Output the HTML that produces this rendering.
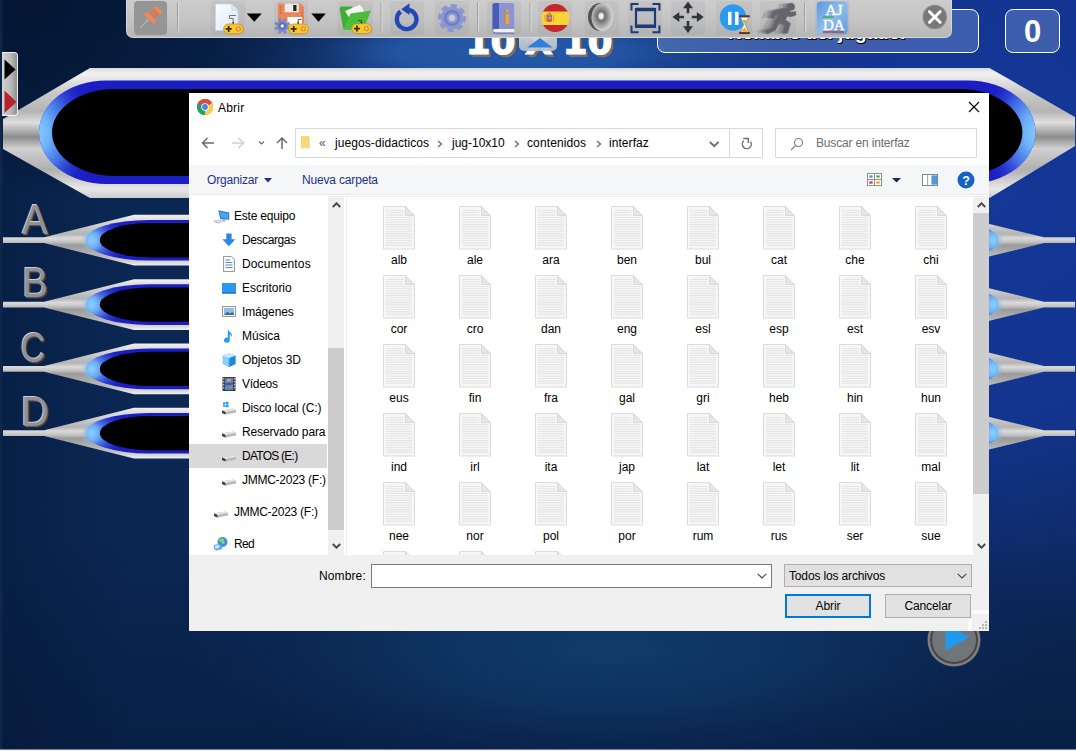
<!DOCTYPE html>
<html lang="es">
<head>
<meta charset="utf-8">
<title>10 X 10</title>
<style>
html,body{margin:0;padding:0;}
body{width:1076px;height:751px;overflow:hidden;position:relative;background:#0a2248;font-family:"Liberation Sans",sans-serif;font-size:12px;color:#000;}
.abs{position:absolute;}
#bg{position:absolute;left:0;top:0;width:1076px;height:751px;display:block;}
/* game hud */
.hudbox{top:9px;height:42px;border:1.5px solid #fff;border-radius:8px;background:rgba(120,150,210,.42);color:#fff;font-weight:bold;text-align:center;box-sizing:content-box;}
#pname{left:657px;width:320px;font-size:19px;line-height:45px;text-shadow:1px 1px 0 #000,0 1px 0 #000;}
#score{left:1005px;width:53px;font-size:31px;line-height:44px;}
#title{left:439px;top:20px;width:200px;text-align:center;font-family:"DejaVu Sans","Liberation Sans",sans-serif;font-weight:bold;font-size:36px;line-height:44px;color:#fff;-webkit-text-stroke:1.100px #fff;text-shadow:2.500px 2.500px 0 #707070,1.500px 1.500px 0 #606060,3px 3px 1px #444;white-space:pre;word-spacing:-3px;}
.letter{left:14px;width:42px;text-align:center;font-size:43px;line-height:43px;color:#909096;text-shadow:-1px -1px 0 #d0d0d0,1px 1px 0 #58585c,2px 1.500px 1px #2e2e34;transform:scaleX(.9);}
#ltab{left:2px;top:52px;width:16px;height:64px;border-radius:0 4px 4px 0;background:linear-gradient(90deg,#d4d4d4,#b8b8b8 60%,#8e8e8e);border:1px solid #f2f2f2;border-left:none;box-sizing:border-box;}
#play{left:927px;top:613px;width:54px;height:54px;}
</style>
</head>
<body>
<svg id="bg" width="1076" height="751" viewBox="0 0 1076 751">
<defs>
<radialGradient id="g1" gradientUnits="userSpaceOnUse" cx="960" cy="170" r="580"><stop offset="0" stop-color="#14379a"/><stop offset=".45" stop-color="#13348e"/><stop offset=".72" stop-color="#0e2b6a" stop-opacity=".7"/><stop offset="1" stop-color="#0b2750" stop-opacity="0"/></radialGradient>
<radialGradient id="g2" gradientUnits="userSpaceOnUse" cx="510" cy="52" r="400" gradientTransform="translate(0 52) scale(1 .2) translate(0 -52)"><stop offset="0" stop-color="#2659aa"/><stop offset=".28" stop-color="#2456a6" stop-opacity=".95"/><stop offset=".5" stop-color="#1a4690" stop-opacity=".6"/><stop offset=".75" stop-color="#143a80" stop-opacity=".2"/><stop offset="1" stop-color="#12367a" stop-opacity="0"/></radialGradient>
<radialGradient id="g3" gradientUnits="userSpaceOnUse" cx="610" cy="650" r="430" gradientTransform="translate(0 650) scale(1 .3) translate(0 -650)"><stop offset="0" stop-color="#103c6a"/><stop offset=".45" stop-color="#0f3664" stop-opacity=".75"/><stop offset="1" stop-color="#0d2c5c" stop-opacity="0"/></radialGradient><linearGradient id="gbot" gradientUnits="userSpaceOnUse" x1="0" x2="0" y1="540" y2="751"><stop offset="0" stop-color="#061838" stop-opacity="0"/><stop offset=".5" stop-color="#061838" stop-opacity=".3"/><stop offset="1" stop-color="#061838" stop-opacity=".55"/></linearGradient>
<radialGradient id="gtl" gradientUnits="userSpaceOnUse" cx="40" cy="20" r="340" gradientTransform="scale(1 .55)"><stop offset="0" stop-color="#031430" stop-opacity=".85"/><stop offset=".6" stop-color="#031430" stop-opacity=".5"/><stop offset="1" stop-color="#031430" stop-opacity="0"/></radialGradient>
<radialGradient id="soft"><stop offset="0" stop-color="#8ad0ff" stop-opacity=".95"/><stop offset=".55" stop-color="#7abcf8" stop-opacity=".6"/><stop offset="1" stop-color="#9ab8e0" stop-opacity="0"/></radialGradient>
<linearGradient id="gl" x1="0" x2="1" y1="0" y2="0"><stop offset="0" stop-color="#04152f" stop-opacity=".4"/><stop offset=".12" stop-color="#04152f" stop-opacity="0"/></linearGradient>
<linearGradient id="silv" gradientUnits="userSpaceOnUse" x1="0" x2="0" y1="68" y2="198"><stop offset="0" stop-color="#d8d8d8"/><stop offset=".04" stop-color="#f2f2f2"/><stop offset=".2" stop-color="#c8c8c8"/><stop offset=".33" stop-color="#b4b4b4"/><stop offset=".42" stop-color="#dedede"/><stop offset=".53" stop-color="#8c8c8c"/><stop offset=".62" stop-color="#d0d0d0"/><stop offset=".78" stop-color="#b0b0b0"/><stop offset=".93" stop-color="#e8e8e8"/><stop offset="1" stop-color="#cccccc"/></linearGradient>
<linearGradient id="silvb" gradientUnits="userSpaceOnUse" x1="0" x2="0" y1="-25.400" y2="25.400"><stop offset="0" stop-color="#f2f2f2"/><stop offset=".1" stop-color="#dcdcdc"/><stop offset=".38" stop-color="#b4b4b4"/><stop offset=".46" stop-color="#dadada"/><stop offset=".53" stop-color="#c4c4c4"/><stop offset=".6" stop-color="#9a9a9a"/><stop offset=".85" stop-color="#bebebe"/><stop offset="1" stop-color="#f0f0f0"/></linearGradient>
<radialGradient id="glowML" gradientUnits="userSpaceOnUse" cx="34" cy="133" r="62" gradientTransform="translate(0 133) scale(1 1.250) translate(0 -133)"><stop offset="0" stop-color="#8ad0ff"/><stop offset=".25" stop-color="#6eb4fa"/><stop offset=".55" stop-color="#4068e4"/><stop offset="1" stop-color="#1a1ec4" stop-opacity="0"/></radialGradient><radialGradient id="glowMR" gradientUnits="userSpaceOnUse" cx="1040" cy="132" r="62" gradientTransform="translate(0 132) scale(1 1.250) translate(0 -132)"><stop offset="0" stop-color="#8ad0ff"/><stop offset=".25" stop-color="#6eb4fa"/><stop offset=".55" stop-color="#4068e4"/><stop offset="1" stop-color="#1a1ec4" stop-opacity="0"/></radialGradient>
<radialGradient id="glowL" gradientUnits="userSpaceOnUse" cx="84" cy="0" r="46" gradientTransform="scale(1 .62)"><stop offset="0" stop-color="#8ad0ff"/><stop offset=".22" stop-color="#6eb4fa"/><stop offset=".5" stop-color="#4470e8"/><stop offset="1" stop-color="#1a1ec4" stop-opacity="0"/></radialGradient><radialGradient id="glowR" gradientUnits="userSpaceOnUse" cx="1000.500" cy="0" r="46" gradientTransform="scale(1 .62)"><stop offset="0" stop-color="#8ad0ff"/><stop offset=".22" stop-color="#6eb4fa"/><stop offset=".5" stop-color="#4470e8"/><stop offset="1" stop-color="#1a1ec4" stop-opacity="0"/></radialGradient>
</defs>
<rect width="1076" height="751" fill="#0b2754"/>
<rect width="1076" height="751" fill="url(#g1)"/>
<rect width="1076" height="751" fill="url(#gbot)"/>
<rect width="1076" height="751" fill="url(#g3)"/>
<rect width="1076" height="751" fill="url(#g2)"/>
<rect width="1076" height="751" fill="url(#gl)"/>
<rect width="1076" height="751" fill="url(#gtl)"/>
<!-- main question panel -->
<polygon points="3,119 90,68 989.500,68 1075,117 1075,146 989.500,198 90,198 3,149" fill="url(#silv)"/>
<path d="M106 80.500 H968.400 A67 51.750 0 0 1 968.400 184 H106 A67 51.750 0 0 1 106 80.500 Z" fill="#1a1ec4"/><path d="M106 80.500 H500V184H106 A67 51.750 0 0 1 106 80.500 Z" fill="url(#glowML)"/><path d="M600 80.500H968.400 A67 51.750 0 0 1 968.400 184 H600Z" fill="url(#glowMR)"/>
<path d="M115 89 H959.400 A63 43.500 0 0 1 959.400 176 H115 A63 43.500 0 0 1 115 89 Z" fill="#000"/>
<!-- answer bars -->
<polygon points="3.0,-2.9 44.0,-2.9 134.0,-25.4 952.0,-25.4 1044.0,-2.9 1075.0,-2.9 1075.0,2.9 1044.0,2.9 952.0,25.4 134.0,25.4 44.0,2.9 3.0,2.9" fill="url(#silvb)" transform="translate(0 240.2)"/>
<path d="M148.5 219.9 H936.0 A62.0 20.3 0 0 1 936.0 260.5 H148.5 A62.0 20.3 0 0 1 148.5 219.9 Z" fill="#1a1ec4"/>
<path d="M148.5 -20.3 H936.0 A62.0 20.3 0 0 1 936.0 20.3 H148.5 A62.0 20.3 0 0 1 148.5 -20.3 Z" fill="url(#glowL)" transform="translate(0 240.2)"/>
<path d="M148.5 -20.3 H936.0 A62.0 20.3 0 0 1 936.0 20.3 H148.5 A62.0 20.3 0 0 1 148.5 -20.3 Z" fill="url(#glowR)" transform="translate(0 240.2)"/>
<ellipse cx="92" cy="240.2" rx="11" ry="12" fill="url(#soft)"/><ellipse cx="992.5" cy="240.2" rx="11" ry="12" fill="url(#soft)"/>
<path d="M149.8 223.0 H934.5 A50.0 17.2 0 0 1 934.5 257.4 H149.8 A50.0 17.2 0 0 1 149.8 223.0 Z" fill="#000"/>
<polygon points="3.0,-2.9 44.0,-2.9 134.0,-25.4 952.0,-25.4 1044.0,-2.9 1075.0,-2.9 1075.0,2.9 1044.0,2.9 952.0,25.4 134.0,25.4 44.0,2.9 3.0,2.9" fill="url(#silvb)" transform="translate(0 304.6)"/>
<path d="M148.5 284.3 H936.0 A62.0 20.3 0 0 1 936.0 324.9 H148.5 A62.0 20.3 0 0 1 148.5 284.3 Z" fill="#1a1ec4"/>
<path d="M148.5 -20.3 H936.0 A62.0 20.3 0 0 1 936.0 20.3 H148.5 A62.0 20.3 0 0 1 148.5 -20.3 Z" fill="url(#glowL)" transform="translate(0 304.6)"/>
<path d="M148.5 -20.3 H936.0 A62.0 20.3 0 0 1 936.0 20.3 H148.5 A62.0 20.3 0 0 1 148.5 -20.3 Z" fill="url(#glowR)" transform="translate(0 304.6)"/>
<ellipse cx="92" cy="304.6" rx="11" ry="12" fill="url(#soft)"/><ellipse cx="992.5" cy="304.6" rx="11" ry="12" fill="url(#soft)"/>
<path d="M149.8 287.4 H934.5 A50.0 17.2 0 0 1 934.5 321.8 H149.8 A50.0 17.2 0 0 1 149.8 287.4 Z" fill="#000"/>
<polygon points="3.0,-2.9 44.0,-2.9 134.0,-25.4 952.0,-25.4 1044.0,-2.9 1075.0,-2.9 1075.0,2.9 1044.0,2.9 952.0,25.4 134.0,25.4 44.0,2.9 3.0,2.9" fill="url(#silvb)" transform="translate(0 368.9)"/>
<path d="M148.5 348.6 H936.0 A62.0 20.3 0 0 1 936.0 389.2 H148.5 A62.0 20.3 0 0 1 148.5 348.6 Z" fill="#1a1ec4"/>
<path d="M148.5 -20.3 H936.0 A62.0 20.3 0 0 1 936.0 20.3 H148.5 A62.0 20.3 0 0 1 148.5 -20.3 Z" fill="url(#glowL)" transform="translate(0 368.9)"/>
<path d="M148.5 -20.3 H936.0 A62.0 20.3 0 0 1 936.0 20.3 H148.5 A62.0 20.3 0 0 1 148.5 -20.3 Z" fill="url(#glowR)" transform="translate(0 368.9)"/>
<ellipse cx="92" cy="368.9" rx="11" ry="12" fill="url(#soft)"/><ellipse cx="992.5" cy="368.9" rx="11" ry="12" fill="url(#soft)"/>
<path d="M149.8 351.7 H934.5 A50.0 17.2 0 0 1 934.5 386.1 H149.8 A50.0 17.2 0 0 1 149.8 351.7 Z" fill="#000"/>
<polygon points="3.0,-2.9 44.0,-2.9 134.0,-25.4 952.0,-25.4 1044.0,-2.9 1075.0,-2.9 1075.0,2.9 1044.0,2.9 952.0,25.4 134.0,25.4 44.0,2.9 3.0,2.9" fill="url(#silvb)" transform="translate(0 433.2)"/>
<path d="M148.5 412.9 H936.0 A62.0 20.3 0 0 1 936.0 453.5 H148.5 A62.0 20.3 0 0 1 148.5 412.9 Z" fill="#1a1ec4"/>
<path d="M148.5 -20.3 H936.0 A62.0 20.3 0 0 1 936.0 20.3 H148.5 A62.0 20.3 0 0 1 148.5 -20.3 Z" fill="url(#glowL)" transform="translate(0 433.2)"/>
<path d="M148.5 -20.3 H936.0 A62.0 20.3 0 0 1 936.0 20.3 H148.5 A62.0 20.3 0 0 1 148.5 -20.3 Z" fill="url(#glowR)" transform="translate(0 433.2)"/>
<ellipse cx="92" cy="433.2" rx="11" ry="12" fill="url(#soft)"/><ellipse cx="992.5" cy="433.2" rx="11" ry="12" fill="url(#soft)"/>
<path d="M149.8 416.0 H934.5 A50.0 17.2 0 0 1 934.5 450.4 H149.8 A50.0 17.2 0 0 1 149.8 416.0 Z" fill="#000"/>
<rect x="0" y="0" width="2.500" height="751" fill="#10294c" opacity=".8"/>
<rect x="0" y="749.500" width="1076" height="1.500" fill="#e8eef4"/>
</svg>
<div class="abs letter" style="top:198px">A</div>
<div class="abs letter" style="top:261px">B</div>
<div class="abs letter" style="top:326px;left:12px;transform:scaleX(.8)">C</div>
<div class="abs letter" style="top:390px">D</div>
<div class="abs" id="ltab"><svg width="16" height="64" viewBox="0 0 16 64" style="display:block"><polygon points="2.500,6.500 13.500,16.500 2.500,26.500" fill="#000"/><polygon points="2.500,37.500 14.500,49 2.500,60" fill="#b8222c"/></svg></div>
<div class="abs" id="title">10 X 10</div>
<div class="abs hudbox" id="pname">Nombre del jugador</div>
<div class="abs hudbox" id="score">0</div>
<svg class="abs" id="play" viewBox="0 0 54 54"><circle cx="27" cy="27" r="26.500" fill="#7e7e84"/><circle cx="27" cy="27" r="24" fill="#4a4244"/><circle cx="27" cy="27" r="22" fill="#70757a"/><polygon points="18.500,11 18.500,37.500 42.500,24" fill="#1e9bf0"/></svg>
<style>
#tb{left:126px;top:0;width:826px;height:37.500px;background:linear-gradient(#cccccc,#c4c4c4 55%,#b6b6b6);border-radius:0 0 7px 7px;border:1px solid #d6d6d6;border-top:none;box-sizing:border-box;}
#tbi{left:0;top:0;}
#ttab{left:519px;top:37px;width:38px;height:14px;background:linear-gradient(#d0d4da,#b8bcc4);opacity:.92;border-radius:0 0 5px 5px;}
</style>

<div class="abs" id="ttab"></div>
<div class="abs" id="tb"></div>
<svg class="abs" id="tbi" width="1076" height="56" viewBox="0 0 1076 56"><defs><g id="pad"><circle cx="10" cy="-.5" r="1" fill="#333"/><rect x=".4" y=".4" width="19.800" height="9.800" rx="4.900" fill="#f8c82c" stroke="#c0921a" stroke-width=".8"/><path d="M5.500 2.300V8.300M2.500 5.300H8.500" stroke="#3a2a10" stroke-width="1.700"/><circle cx="15.200" cy="5.300" r="2.700" fill="#e88a28"/><path d="M13.500 5.300H17M15.200 3.600V7" stroke="#f8d878" stroke-width=".9"/></g>
<linearGradient id="docg" x1="0" x2="1" y1="0" y2="1"><stop offset="0" stop-color="#fbfdff"/><stop offset="1" stop-color="#dbe7f6"/></linearGradient>
<radialGradient id="spk" cx=".42" cy=".46" r=".62"><stop offset="0" stop-color="#fff"/><stop offset=".14" stop-color="#e4e4e4"/><stop offset=".26" stop-color="#6e6e6e"/><stop offset=".5" stop-color="#9a9a9a"/><stop offset=".8" stop-color="#d2d2d2"/><stop offset="1" stop-color="#a8a8a8"/></radialGradient>
<linearGradient id="ajda" x1="0" x2="1" y1="0" y2="1"><stop offset="0" stop-color="#5a98dc"/><stop offset=".5" stop-color="#8ebcec"/><stop offset="1" stop-color="#5e9ade"/></linearGradient>
<clipPath id="flagc"><circle cx="555.300" cy="18.100" r="14"/></clipPath>
</defs>
<polygon points="527,47.500 540,38 552.500,47.500" fill="#2e80dc"/>
<rect x="211" y="1" width="34" height="34" rx="4" fill="#000" opacity=".035"/><rect x="274" y="1" width="34" height="34" rx="4" fill="#000" opacity=".035"/><rect x="338" y="1" width="35" height="34" rx="4" fill="#000" opacity=".035"/><rect x="390" y="1" width="34" height="34" rx="4" fill="#000" opacity=".035"/><rect x="435" y="1" width="34" height="34" rx="4" fill="#000" opacity=".035"/><rect x="487" y="1" width="34" height="34" rx="4" fill="#000" opacity=".035"/><rect x="538" y="1" width="34" height="34" rx="4" fill="#000" opacity=".035"/><rect x="585" y="1" width="34" height="34" rx="4" fill="#000" opacity=".035"/><rect x="628" y="1" width="34" height="34" rx="4" fill="#000" opacity=".035"/><rect x="671" y="1" width="34" height="34" rx="4" fill="#000" opacity=".035"/><rect x="716" y="1" width="36" height="34" rx="4" fill="#000" opacity=".035"/><rect x="760" y="1" width="36" height="34" rx="4" fill="#000" opacity=".035"/><rect x="815" y="1" width="35" height="34" rx="4" fill="#000" opacity=".035"/>
<rect x="134" y="1" width="33" height="34" rx="4" fill="#959595"/>
<g transform="translate(151.500 16.500) rotate(45)"><rect x="-5" y="-11" width="10" height="3.500" rx="1" fill="#e48c5c"/><rect x="-3.500" y="-7.500" width="7" height="7.500" fill="#d87a52"/><rect x="-7" y="-.5" width="14" height="4.500" rx="1" fill="#e48c5c"/><path d="M0 4V16" stroke="#aeb0b8" stroke-width="1.400"/></g>
<path d="M177.5 2.500V31.500" stroke="#a2a2a2" stroke-width="1.100"/><path d="M178.6 2.500V31.500" stroke="#dadada" stroke-width="1"/>
<path d="M381 2.500V31.500" stroke="#a2a2a2" stroke-width="1.100"/><path d="M382.1 2.500V31.500" stroke="#dadada" stroke-width="1"/>
<path d="M477.5 2.500V31.500" stroke="#a2a2a2" stroke-width="1.100"/><path d="M478.6 2.500V31.500" stroke="#dadada" stroke-width="1"/>
<path d="M530 2.500V31.500" stroke="#a2a2a2" stroke-width="1.100"/><path d="M531.1 2.500V31.500" stroke="#dadada" stroke-width="1"/>
<path d="M804.5 2.500V31.500" stroke="#a2a2a2" stroke-width="1.100"/><path d="M805.6 2.500V31.500" stroke="#dadada" stroke-width="1"/>
<path d="M215.500 4H232L238 10V30.500H215.500Z" fill="url(#docg)" stroke="#c6d4e6" stroke-width=".8"/><path d="M232 4V10H238Z" fill="#dfe8f4" stroke="#c0cede" stroke-width=".8"/><path d="M233.200 23V18.500H229.500V15.500H236" stroke="#666" stroke-width=".9" fill="none"/>
<use href="#pad" transform="translate(223.200 23.600)"/>
<polygon points="246.700,13.500 261.800,13.500 254.250,21.800" fill="#000"/>
<path d="M278 3.600H300.500L304 7V24.500H278Z" fill="#e8875a"/><rect x="284.700" y="3.600" width="14" height="8.600" fill="#ececec"/><rect x="293.200" y="5" width="3.300" height="6" fill="#222"/><rect x="287.500" y="17" width="14.500" height="8" fill="#fcfcfc"/><path d="M280.300 6v1.500M280.300 9v1.500M280.300 12v1.500M302 12v1.500M302 15v1.500" stroke="#b8502a" stroke-width=".9"/>
<g transform="translate(282.300 26)"><circle r="5.800" fill="#7a88c8"/><circle r="6.600" fill="none" stroke="#7a88c8" stroke-width="2.800" stroke-dasharray="2.700 2.484" transform="rotate(10)"/><circle r="3.600" fill="#5c6ab0"/><circle r="1.700" fill="#f4f4fa"/></g>
<path d="M298.200 23V19.500H301.500" stroke="#444" stroke-width=".9" fill="none"/><use href="#pad" transform="translate(288.200 23.600)"/>
<polygon points="311.300,13.500 325.800,13.500 318.550,21.800" fill="#000"/>
<path d="M339.500 8.500L341 6.500H351.500L354 10H364L360 29.500H343.500Z" fill="#3fae34"/><path d="M345 11L360 4.800L364.500 11.500L350 19Z" fill="#f4f6f4"/><path d="M343.500 29.500L350.500 13.500L371 10.500L363.500 29.500Z" fill="#4cbc3c"/><path d="M361.500 23V20.500H358" stroke="#444" stroke-width=".9" fill="none"/>
<use href="#pad" transform="translate(351.400 23.300)"/>
<path d="M400.600 11.600A9.800 9.800 0 1 0 409 9.800" stroke="#2248b8" stroke-width="4.400" fill="none"/><polygon points="409.500,3.300 409.500,15 401.300,9.200" fill="#2248b8"/>
<g transform="translate(452 18)"><circle r="11.300" fill="#8a98d2"/><circle r="12.300" fill="none" stroke="#8a98d2" stroke-width="3.600" stroke-dasharray="6 3.660" transform="rotate(-8)"/><circle r="8" fill="#6f7ec0"/><circle r="5.600" fill="#8a98d2"/><circle r="3.300" fill="#c6c8d2"/></g>
<rect x="492.500" y="3" width="21.700" height="30.200" rx="2.200" fill="#8a94d4"/><path d="M492.500 5.200Q492.500 3 494.700 3H499V29.500H492.500Z" fill="#4a5cb8"/><path d="M493 30.500Q493 29 495 29H514.200V32.500H495Q493 32.500 493 30.500Z" fill="#f2f3fa"/><path d="M493 31.500Q493.500 33.200 495.500 33.200H514.200" stroke="#5a64a8" stroke-width=".9" fill="none"/><text x="506.800" y="24.400" font-family="Liberation Serif,serif" font-weight="bold" font-size="22" fill="#f2ae28" stroke="#c08818" stroke-width=".4" text-anchor="middle">i</text>
<g clip-path="url(#flagc)"><rect x="540" y="3" width="31" height="9" fill="#c4262a"/><rect x="540" y="11.500" width="31" height="13.500" fill="#f8d438"/><rect x="540" y="25" width="31" height="9" fill="#c4262a"/><rect x="546.500" y="14" width="5.500" height="8" rx="1.500" fill="#c8683a"/><path d="M545 15v6M553.500 15v6" stroke="#c8a070" stroke-width="1.200"/><circle cx="549.300" cy="14" r="1.800" fill="#c89058"/><circle cx="549.800" cy="18" r="1.300" fill="#a8b0c8"/></g>
<ellipse cx="600.500" cy="17" rx="12.500" ry="14" fill="#525252"/><ellipse cx="603" cy="17.200" rx="11.500" ry="14.200" fill="url(#spk)"/>
<g stroke="#1c3a78" fill="none"><path d="M636 9.500H655M636 26.200H655" stroke-width="3.600"/><path d="M636 8V28M655 8V28" stroke-width="2.200"/><path d="M631.500 10.500V4H638.500M652.500 4H659.400V10.500M659.400 25.500V32.200H652.500M638.500 32.200H631.500V25.500" stroke-width="2"/></g>
<g fill="#2c3440" stroke="#2c3440"><path d="M688 6V13.200M688 21V28.500M677 17H684M691.800 17H699" stroke-width="2.600"/><g stroke="none"><polygon points="688,1.500 693,8.200 683,8.200"/><polygon points="688,33 693,26.300 683,26.300"/><polygon points="672.500,17 679.300,12 679.300,22"/><polygon points="703.700,17 696.900,12 696.900,22"/></g></g>
<circle cx="733" cy="17.400" r="13.200" fill="#2a9af0"/><rect x="728" y="11.800" width="3.500" height="13.200" fill="#fff"/><rect x="735" y="11.800" width="3.500" height="13.200" fill="#fff"/>
<g><rect x="739.200" y="15.300" width="10.500" height="2" fill="#5a2e24"/><rect x="739.200" y="32" width="10.500" height="2" fill="#5a2e24"/><path d="M740.500 17.300H748.500L745.300 24.600L748.500 32H740.500L743.700 24.600Z" fill="#f6f2e8" stroke="#8a7a6a" stroke-width=".6"/><path d="M742 20H747L744.500 24Z" fill="#f0a820"/><path d="M741.500 31.500L744.500 27.500L747.500 31.500Z" fill="#f0a820"/></g>
<g fill="#7c7c80" opacity=".35" transform="translate(-9 0)"><circle cx="791" cy="6.800" r="3.600"/><path d="M777.500 10L786.500 8L791.500 12.500L795.500 11.500L796 15L789.800 17L787.500 15L785.500 20L790.500 23.500L787.500 33L783 33.500L785 25.500L779.500 22L775 30.500L767 34L765.500 31L772 28L777.500 17.500L779.500 13.500L775.500 15L773.500 18.500L770.500 17.500L773.500 11.500Z"/></g><g fill="#74747a" opacity=".5" transform="translate(-5 0)"><circle cx="791" cy="6.800" r="3.600"/><path d="M777.500 10L786.500 8L791.500 12.500L795.500 11.500L796 15L789.800 17L787.500 15L785.500 20L790.500 23.500L787.500 33L783 33.500L785 25.500L779.500 22L775 30.500L767 34L765.500 31L772 28L777.500 17.500L779.500 13.500L775.500 15L773.500 18.500L770.500 17.500L773.500 11.500Z"/></g><g fill="#6a6a70" opacity=".6" transform="translate(-2.500 0)"><circle cx="791" cy="6.800" r="3.600"/><path d="M777.500 10L786.500 8L791.500 12.500L795.500 11.500L796 15L789.800 17L787.500 15L785.500 20L790.500 23.500L787.500 33L783 33.500L785 25.500L779.500 22L775 30.500L767 34L765.500 31L772 28L777.500 17.500L779.500 13.500L775.500 15L773.500 18.500L770.500 17.500L773.500 11.500Z"/></g><g fill="#63656d" stroke="#63656d" stroke-width=".6" stroke-linejoin="round"><circle cx="791" cy="6.800" r="3.600"/><path d="M777.500 10L786.500 8L791.500 12.500L795.500 11.500L796 15L789.800 17L787.500 15L785.500 20L790.500 23.500L787.500 33L783 33.500L785 25.500L779.500 22L775 30.500L767 34L765.500 31L772 28L777.500 17.500L779.500 13.500L775.500 15L773.500 18.500L770.500 17.500L773.500 11.500Z"/></g>
<rect x="816.800" y="1.600" width="30.800" height="33" rx="4" fill="url(#ajda)"/><path d="M823 17H833.600" stroke="#3cb048" stroke-width="1.500"/><path d="M823 32H843.500" stroke="#d03a2a" stroke-width="1.500"/>
<text x="834" y="15.300" font-family="Liberation Serif,serif" font-size="15.600" fill="#fff" stroke="#fff" stroke-width=".35" text-anchor="middle">AJ</text><text x="833.800" y="30.200" font-family="Liberation Serif,serif" font-size="15" fill="#fff" stroke="#fff" stroke-width=".35" text-anchor="middle">DA</text>
<circle cx="934.800" cy="17" r="12.200" fill="#8a8a8a"/><circle cx="934.800" cy="17" r="11" fill="#787878"/><path d="M929.500 11.700L940.100 22.300M940.100 11.700L929.500 22.300" stroke="#fff" stroke-width="3" stroke-linecap="round"/>
</svg>
<style>
#dlg{left:189px;top:93px;width:800px;height:538px;background:#fff;overflow:hidden;color:#000;}
#dlg .t{position:absolute;white-space:nowrap;line-height:16px;height:16px;}
#dtitle{left:29px;top:7px;letter-spacing:.2px;}
#addr{left:106px;top:35px;width:466px;height:28px;border:1px solid #d9d9d9;}
#addr i{position:absolute;left:433px;top:0;width:1px;height:28px;background:#d9d9d9;}
#search{left:586px;top:35px;width:200px;height:28px;border:1px solid #d9d9d9;}
#cmd{left:0;top:72px;width:800px;height:30px;background:#f5f6f7;border-bottom:1px solid #e9eaeb;box-sizing:border-box;}
#cmd .t{color:#1e3287;}
#side{left:0;top:103px;width:138px;height:359px;overflow:hidden;}
#side .row{position:absolute;left:0;width:138px;height:24px;}
#side .row .t{top:4px;}
#side .sel{background:#d9d9d9;}
#sb1{left:139px;top:103px;width:16px;height:359px;background:#f0f0f0;}
#sb1 i{position:absolute;left:0;top:152px;width:16px;height:182px;background:#cdcdcd;}
#vsep{left:157px;top:103px;width:1px;height:359px;background:#ededed;}
#pane{left:156px;top:103px;width:628px;height:359px;overflow:hidden;border-top:1px solid #f0f0f0;box-sizing:border-box;}
#sb2{left:784px;top:103px;width:16px;height:359px;background:#f0f0f0;}
#sb2 i{position:absolute;left:0;top:17px;width:16px;height:281px;background:#cdcdcd;}
.fi{position:absolute;width:76px;height:69px;}
.fi svg{position:absolute;left:22px;top:0;}
.fi span{position:absolute;left:0;top:46px;width:76px;text-align:center;line-height:16px;}
#foot{left:0;top:462px;width:800px;height:76px;background:#f0f0f0;}
#fname{left:182px;top:9px;width:399px;height:22px;border:1px solid #7a7a7a;background:#fff;}
#ftype{left:595px;top:9px;width:186px;height:21px;border:1px solid #adadad;background:#e1e1e1;}
.btn{position:absolute;top:39px;width:84px;height:22px;border:1px solid #adadad;background:#e1e1e1;text-align:center;line-height:23px;letter-spacing:-.1px;}
#bopen{left:596px;border:2px solid #0078d7;width:82px;height:20px;line-height:21px;}
#bcancel{left:696px;}
</style>

<div class="abs" id="dlg">
<svg class="abs" style="left:8px;top:6px" width="16" height="16" viewBox="0 0 16 16"><circle cx="8" cy="8" r="8" fill="#dd4b3e"/><path d="M8 8 L1.070 4 A8 8 0 0 0 8 16 Z" fill="#1da462"/><path d="M8 8 L8 16 A8 8 0 0 0 14.930 4 Z" fill="#ffcd40"/><path d="M8 8 L14.930 4 A8 8 0 0 0 1.070 4 Z" fill="#dd4b3e"/><circle cx="8" cy="8" r="3.700" fill="#fff"/><circle cx="8" cy="8" r="2.900" fill="#4285f4"/></svg>
<div class="t" id="dtitle">Abrir</div>
<svg class="abs" style="left:779px;top:8px" width="12" height="12" viewBox="0 0 12 12"><path d="M1 1L11 11M11 1L1 11" stroke="#000" stroke-width="1.100" fill="none"/></svg>
<svg class="abs" style="left:10px;top:42px" width="95" height="16" viewBox="0 0 95 16"><path d="M15 8H3.500M8.500 3L3.500 8L8.500 13" stroke="#6a6a6a" stroke-width="1.500" fill="none"/><path d="M33 8H44.500M39.500 3L44.500 8L39.500 13" stroke="#cfcfcf" stroke-width="1.500" fill="none"/><path d="M60 6.500L62.500 9L65 6.500" stroke="#6a6a6a" stroke-width="1.200" fill="none"/><path d="M83 14V3M78 8L83 3L88 8" stroke="#6a6a6a" stroke-width="1.500" fill="none"/></svg>
<div class="abs" id="addr"><i></i>
<svg class="abs" style="left:4px;top:6px" width="11" height="15" viewBox="0 0 11 15"><path d="M1 1H7.500L8.500 2.500V13.500H7L5.500 12.500L4 13.500H1Z" fill="#f7d978"/><path d="M7.500 1L9.500 2V12.500L8.500 13.500V2.500Z" fill="#e8bf50"/></svg>
<div class="t" style="left:23px;top:6px;color:#555">«</div>
<div class="t" style="left:39px;top:6px;letter-spacing:.08px">juegos-didacticos</div><svg class="abs" style="left:141px;top:11px" width="6" height="8" viewBox="0 0 6 8"><path d="M1 1L4.500 4L1 7" stroke="#6a6a6a" stroke-width="1.300" fill="none"/></svg>
<div class="t" style="left:156px;top:6px">jug-10x10</div><svg class="abs" style="left:218px;top:11px" width="6" height="8" viewBox="0 0 6 8"><path d="M1 1L4.500 4L1 7" stroke="#6a6a6a" stroke-width="1.300" fill="none"/></svg>
<div class="t" style="left:231px;top:6px;letter-spacing:.12px">contenidos</div><svg class="abs" style="left:300px;top:11px" width="6" height="8" viewBox="0 0 6 8"><path d="M1 1L4.500 4L1 7" stroke="#6a6a6a" stroke-width="1.300" fill="none"/></svg>
<div class="t" style="left:313px;top:6px;letter-spacing:.06px">interfaz</div>
<svg class="abs" style="left:413px;top:12px" width="11" height="7" viewBox="0 0 11 7"><path d="M.8 .8L5.200 5.200L9.600 .8" stroke="#6c6c74" stroke-width="1.900" fill="none"/></svg>
<svg class="abs" style="left:443px;top:7px" width="16" height="16" viewBox="0 0 16 16"><path d="M4.900 4.750A4.500 4.500 0 1 0 11.500 5.600" stroke="#6c6c74" stroke-width="1.400" fill="none"/><path d="M4.200 2.500H9.300V7" stroke="#6c6c74" stroke-width="1.400" fill="none"/></svg>
</div>
<div class="abs" id="search"><svg class="abs" style="left:14px;top:8px" width="14" height="14" viewBox="0 0 14 14"><circle cx="8.500" cy="5.500" r="4" stroke="#7a7a7a" stroke-width="1.100" fill="none"/><path d="M5.700 8.300L1 13" stroke="#7a7a7a" stroke-width="1.100"/></svg><div class="t" style="left:40px;top:6px;color:#6d6d6d;letter-spacing:-.17px">Buscar en interfaz</div></div>
<div class="abs" id="cmd"><div class="t" style="left:18px;top:7px;letter-spacing:-.19px">Organizar</div><svg class="abs" style="left:75px;top:13px" width="8" height="5" viewBox="0 0 8 5"><path d="M0 0H8L4 4.500Z" fill="#1e3287"/></svg><div class="t" style="left:113px;top:7px;letter-spacing:-.17px">Nueva carpeta</div>
<svg class="abs" style="left:678px;top:8px" width="15" height="13" viewBox="0 0 16 14" preserveAspectRatio="none"><rect x=".5" y=".5" width="15" height="13" fill="#fff" stroke="#8a8a8a"/><path d="M8 .5V13.500M.5 7H15.500" stroke="#8a8a8a"/><rect x="2.500" y="2.500" width="3.500" height="2.500" fill="#4a90e0"/><rect x="10" y="2.500" width="3.500" height="2.500" fill="#5aa040"/><rect x="2.500" y="9" width="3.500" height="2.500" fill="#d83a2a"/><rect x="10" y="9" width="3.500" height="2.500" fill="#e8a020"/></svg>
<svg class="abs" style="left:703px;top:13px" width="9" height="5" viewBox="0 0 9 5"><path d="M0 0H9L4.500 4.500Z" fill="#1e2a50"/></svg>
<svg class="abs" style="left:733px;top:9px" width="16" height="12" viewBox="0 0 17 13" preserveAspectRatio="none"><rect x=".5" y=".5" width="16" height="12" fill="#fff" stroke="#7a7a7a"/><rect x="10" y="1.500" width="6" height="10" fill="#4a9ae8"/><path d="M6 .5V12.500" stroke="#9a9a9a"/></svg>
<svg class="abs" style="left:768px;top:6px" width="18" height="18" viewBox="0 0 18 18"><circle cx="9" cy="9" r="8.500" fill="#1662c4"/><text x="9" y="13.500" font-family="Liberation Sans,sans-serif" font-weight="bold" font-size="12.500" fill="#fff" text-anchor="middle">?</text></svg>
</div>
<div class="abs" id="side">
<div class="row" style="top:8px"><span class="abs" style="left:24px;top:4px;width:16px;height:16px"><svg width="17" height="16" viewBox="0 0 17 16"><path d="M5.300 2.300L16.200 4.600V11.800L7.300 11Z" fill="#1e78d2"/><path d="M6.300 3.600L15.300 5.500V10.700L8 10Z" fill="#48a4f0"/><path d="M9.500 11.200L12.500 11.500L12 13.500L9 13Z" fill="#9aa4ae"/><path d="M.7 12.600L7.500 11.200L12 13.600L5.200 15.600Z" fill="#d4d8dc"/><path d="M.7 12.600L5.200 14.600V15.600L.7 13.400Z" fill="#a8aeb4"/></svg></span><div class="t" style="left:45px;letter-spacing:-0.2px">Este equipo</div></div>
<div class="row" style="top:32px"><span class="abs" style="left:32px;top:4px;width:16px;height:16px"><svg width="16" height="16" viewBox="0 0 16 16"><path d="M5.300 1.400H10.600V7.300H14.400L7.900 14.300L1.300 7.300H5.300Z" fill="#2e86e0"/></svg></span><div class="t" style="left:53px;letter-spacing:-0.42px">Descargas</div></div>
<div class="row" style="top:56px"><span class="abs" style="left:32px;top:4px;width:16px;height:16px"><svg width="16" height="16" viewBox="0 0 16 16"><path d="M2.500 .5H10.500L13.500 3.500V15.500H2.500Z" fill="#fafafa" stroke="#9a9a9a"/><path d="M4.500 4H9M4.500 6.500H11.500M4.500 9H11.500M4.500 11.500H11.500" stroke="#5a8ed0" stroke-width="1.200"/></svg></span><div class="t" style="left:53px;letter-spacing:0.14px">Documentos</div></div>
<div class="row" style="top:80px"><span class="abs" style="left:32px;top:4px;width:16px;height:16px"><svg width="16" height="16" viewBox="0 0 16 16"><rect x="1" y="3" width="14" height="10.500" fill="#2a98ee"/><rect x="1" y="12.300" width="14" height="1.200" fill="#1668c0"/></svg></span><div class="t" style="left:53px;letter-spacing:-0.04px">Escritorio</div></div>
<div class="row" style="top:104px"><span class="abs" style="left:32px;top:4px;width:16px;height:16px"><svg width="16" height="16" viewBox="0 0 16 16"><rect x="1.500" y="2.500" width="13" height="10" fill="#eef4fa" stroke="#9a9a9a"/><rect x="3" y="4" width="10" height="7" fill="#8ec0e8"/><path d="M3 11L6.500 7.500L9 9.500L11 8L13 9.500V11Z" fill="#4a6a8a"/></svg></span><div class="t" style="left:53px;letter-spacing:-0.14px">Imágenes</div></div>
<div class="row" style="top:128px"><span class="abs" style="left:32px;top:4px;width:16px;height:16px"><svg width="16" height="16" viewBox="0 0 16 16"><path d="M6.800 1C7.300 3.800 12.300 4.800 10.800 9.300C10.600 7.300 9.300 6.500 8.800 6.300V12.200A2.900 2.500 0 1 1 6.800 9.800Z" fill="#2a9af0"/></svg></span><div class="t" style="left:53px;letter-spacing:0px">Música</div></div>
<div class="row" style="top:152px"><span class="abs" style="left:32px;top:4px;width:16px;height:16px"><svg width="16" height="16" viewBox="0 0 16 16"><path d="M8 1L14.500 3.500V12L8 15L1.500 12V3.500Z" fill="#8ccff8"/><path d="M8 6L14.500 3.500V12L8 15Z" fill="#1e86de"/><path d="M8 6L1.500 3.500L8 1L14.500 3.500Z" fill="#c4e8fc"/><path d="M8 6V15" stroke="#5ab4f0" stroke-width=".8"/></svg></span><div class="t" style="left:53px;letter-spacing:-0.13px">Objetos 3D</div></div>
<div class="row" style="top:176px"><span class="abs" style="left:32px;top:4px;width:16px;height:16px"><svg width="16" height="16" viewBox="0 0 16 16"><rect x="1.500" y="1" width="13" height="14" fill="#3a3a3a"/><rect x="4" y="2" width="8" height="5.500" fill="#4a7ed0"/><rect x="6" y="3" width="4" height="2.500" fill="#e8a040"/><rect x="4" y="8.500" width="8" height="5.500" fill="#4a88d8"/><rect x="8" y="10" width="3" height="2" fill="#e07030"/><path d="M2.700 2V14M13.300 2V14" stroke="#ddd" stroke-width="1" stroke-dasharray="1.500 1.500"/></svg></span><div class="t" style="left:53px;letter-spacing:-0.28px">Vídeos</div></div>
<div class="row" style="top:200px"><span class="abs" style="left:32px;top:4px;width:16px;height:16px"><svg width="16" height="16" viewBox="0 0 16 16"><path d="M1 10.500L12 8.500L15 10V12.500L4.500 14.500L1 13Z" fill="#b8b8b8"/><path d="M1 10.500L12 8.500L15 10L4.500 12Z" fill="#e4e4e4"/><path d="M1 10.500L4.500 12V14.500L1 13Z" fill="#3a3a3a"/><path d="M2 2.500L4.300 2.200V4.300H2ZM4.800 2.100L7.500 1.700V4.300H4.800ZM2 4.800H4.300V6.900L2 6.600ZM4.800 4.800H7.500V7.400L4.800 7Z" fill="#1e9af0"/></svg></span><div class="t" style="left:53px;letter-spacing:-0.125px">Disco local (C:)</div></div>
<div class="row" style="top:224px"><span class="abs" style="left:32px;top:4px;width:16px;height:16px"><svg width="16" height="16" viewBox="0 0 16 16"><path d="M1 9.500L12 7.500L15 9V11.500L4.500 13.500L1 12Z" fill="#b8b8b8"/><path d="M1 9.500L12 7.500L15 9L4.500 11Z" fill="#e4e4e4"/><path d="M1 9.500L4.500 11V13.500L1 12Z" fill="#3a3a3a"/></svg></span><div class="t" style="left:53px;letter-spacing:-0.15px">Reservado para el sistema</div></div>
<div class="row sel" style="top:248px"><span class="abs" style="left:32px;top:4px;width:16px;height:16px"><svg width="16" height="16" viewBox="0 0 16 16"><path d="M1 9.500L12 7.500L15 9V11.500L4.500 13.500L1 12Z" fill="#b8b8b8"/><path d="M1 9.500L12 7.500L15 9L4.500 11Z" fill="#e4e4e4"/><path d="M1 9.500L4.500 11V13.500L1 12Z" fill="#3a3a3a"/></svg></span><div class="t" style="left:53px;letter-spacing:-0.75px">DATOS (E:)</div></div>
<div class="row" style="top:272px"><span class="abs" style="left:32px;top:4px;width:16px;height:16px"><svg width="16" height="16" viewBox="0 0 16 16"><path d="M1 9.500L12 7.500L15 9V11.500L4.500 13.500L1 12Z" fill="#b8b8b8"/><path d="M1 9.500L12 7.500L15 9L4.500 11Z" fill="#e4e4e4"/><path d="M1 9.500L4.500 11V13.500L1 12Z" fill="#3a3a3a"/></svg></span><div class="t" style="left:53px;letter-spacing:-0.26px">JMMC-2023 (F:)</div></div>
<div class="row" style="top:304px"><span class="abs" style="left:24px;top:4px;width:16px;height:16px"><svg width="16" height="16" viewBox="0 0 16 16"><path d="M1 9.500L12 7.500L15 9V11.500L4.500 13.500L1 12Z" fill="#b8b8b8"/><path d="M1 9.500L12 7.500L15 9L4.500 11Z" fill="#e4e4e4"/><path d="M1 9.500L4.500 11V13.500L1 12Z" fill="#3a3a3a"/></svg></span><div class="t" style="left:45px;letter-spacing:-0.26px">JMMC-2023 (F:)</div></div>
<div class="row" style="top:336px"><span class="abs" style="left:24px;top:4px;width:16px;height:16px"><svg width="16" height="16" viewBox="0 0 16 16"><circle cx="9.500" cy="6" r="5" fill="#3a8ee0"/><path d="M5.500 4C7 2.500 10 2 11.500 3.500C10.500 5 12.500 6.500 11 8.500C9 8 8 6 5.500 4Z" fill="#8ad078"/><path d="M1 9L6.500 8L9 9.500V13L3.500 14.500L1 13Z" fill="#5aa8ec"/><path d="M2 9.800L6.300 9V12L2 12.800Z" fill="#cfe8fa"/></svg></span><div class="t" style="left:45px;letter-spacing:-0.67px">Red</div></div>
</div>
<div class="abs" id="sb1"><i></i><svg class="abs" style="left:4px;top:6px" width="9" height="6" viewBox="0 0 9 6"><path d="M.8 5L4.500 1.300L8.200 5" stroke="#484848" stroke-width="1.900" fill="none"/></svg><svg class="abs" style="left:4px;top:347px" width="9" height="6" viewBox="0 0 9 6"><path d="M.8 1L4.500 4.700L8.200 1" stroke="#484848" stroke-width="1.900" fill="none"/></svg></div><div class="abs" id="vsep"></div>
<div class="abs" id="pane">
<div class="fi" style="left:16px;top:9px"><svg width="32" height="44" viewBox="0 0 32 44"><path d="M.5 .5H22.500L31.500 9.500V43H.5Z" fill="#f6f6f6" stroke="#dcdcdc"/><path d="M22.500 .5V9.500H31.500Z" fill="#e6e6e6" stroke="#dadada" stroke-linejoin="round"/><path d="M3 4.50H20.5M3 6.81H20.5M3 9.12H20.5M3 11.43H29M3 13.74H29M3 16.05H29M3 18.36H29M3 20.67H29M3 22.98H29M3 25.29H29M3 27.60H29M3 29.91H29M3 32.22H29M3 34.53H29M3 36.84H29M3 39.15H29" stroke="#e5e5e5" stroke-width="1.100" fill="none"/></svg><span>alb</span></div>
<div class="fi" style="left:92px;top:9px"><svg width="32" height="44" viewBox="0 0 32 44"><path d="M.5 .5H22.500L31.500 9.500V43H.5Z" fill="#f6f6f6" stroke="#dcdcdc"/><path d="M22.500 .5V9.500H31.500Z" fill="#e6e6e6" stroke="#dadada" stroke-linejoin="round"/><path d="M3 4.50H20.5M3 6.81H20.5M3 9.12H20.5M3 11.43H29M3 13.74H29M3 16.05H29M3 18.36H29M3 20.67H29M3 22.98H29M3 25.29H29M3 27.60H29M3 29.91H29M3 32.22H29M3 34.53H29M3 36.84H29M3 39.15H29" stroke="#e5e5e5" stroke-width="1.100" fill="none"/></svg><span>ale</span></div>
<div class="fi" style="left:168px;top:9px"><svg width="32" height="44" viewBox="0 0 32 44"><path d="M.5 .5H22.500L31.500 9.500V43H.5Z" fill="#f6f6f6" stroke="#dcdcdc"/><path d="M22.500 .5V9.500H31.500Z" fill="#e6e6e6" stroke="#dadada" stroke-linejoin="round"/><path d="M3 4.50H20.5M3 6.81H20.5M3 9.12H20.5M3 11.43H29M3 13.74H29M3 16.05H29M3 18.36H29M3 20.67H29M3 22.98H29M3 25.29H29M3 27.60H29M3 29.91H29M3 32.22H29M3 34.53H29M3 36.84H29M3 39.15H29" stroke="#e5e5e5" stroke-width="1.100" fill="none"/></svg><span>ara</span></div>
<div class="fi" style="left:244px;top:9px"><svg width="32" height="44" viewBox="0 0 32 44"><path d="M.5 .5H22.500L31.500 9.500V43H.5Z" fill="#f6f6f6" stroke="#dcdcdc"/><path d="M22.500 .5V9.500H31.500Z" fill="#e6e6e6" stroke="#dadada" stroke-linejoin="round"/><path d="M3 4.50H20.5M3 6.81H20.5M3 9.12H20.5M3 11.43H29M3 13.74H29M3 16.05H29M3 18.36H29M3 20.67H29M3 22.98H29M3 25.29H29M3 27.60H29M3 29.91H29M3 32.22H29M3 34.53H29M3 36.84H29M3 39.15H29" stroke="#e5e5e5" stroke-width="1.100" fill="none"/></svg><span>ben</span></div>
<div class="fi" style="left:320px;top:9px"><svg width="32" height="44" viewBox="0 0 32 44"><path d="M.5 .5H22.500L31.500 9.500V43H.5Z" fill="#f6f6f6" stroke="#dcdcdc"/><path d="M22.500 .5V9.500H31.500Z" fill="#e6e6e6" stroke="#dadada" stroke-linejoin="round"/><path d="M3 4.50H20.5M3 6.81H20.5M3 9.12H20.5M3 11.43H29M3 13.74H29M3 16.05H29M3 18.36H29M3 20.67H29M3 22.98H29M3 25.29H29M3 27.60H29M3 29.91H29M3 32.22H29M3 34.53H29M3 36.84H29M3 39.15H29" stroke="#e5e5e5" stroke-width="1.100" fill="none"/></svg><span>bul</span></div>
<div class="fi" style="left:396px;top:9px"><svg width="32" height="44" viewBox="0 0 32 44"><path d="M.5 .5H22.500L31.500 9.500V43H.5Z" fill="#f6f6f6" stroke="#dcdcdc"/><path d="M22.500 .5V9.500H31.500Z" fill="#e6e6e6" stroke="#dadada" stroke-linejoin="round"/><path d="M3 4.50H20.5M3 6.81H20.5M3 9.12H20.5M3 11.43H29M3 13.74H29M3 16.05H29M3 18.36H29M3 20.67H29M3 22.98H29M3 25.29H29M3 27.60H29M3 29.91H29M3 32.22H29M3 34.53H29M3 36.84H29M3 39.15H29" stroke="#e5e5e5" stroke-width="1.100" fill="none"/></svg><span>cat</span></div>
<div class="fi" style="left:472px;top:9px"><svg width="32" height="44" viewBox="0 0 32 44"><path d="M.5 .5H22.500L31.500 9.500V43H.5Z" fill="#f6f6f6" stroke="#dcdcdc"/><path d="M22.500 .5V9.500H31.500Z" fill="#e6e6e6" stroke="#dadada" stroke-linejoin="round"/><path d="M3 4.50H20.5M3 6.81H20.5M3 9.12H20.5M3 11.43H29M3 13.74H29M3 16.05H29M3 18.36H29M3 20.67H29M3 22.98H29M3 25.29H29M3 27.60H29M3 29.91H29M3 32.22H29M3 34.53H29M3 36.84H29M3 39.15H29" stroke="#e5e5e5" stroke-width="1.100" fill="none"/></svg><span>che</span></div>
<div class="fi" style="left:548px;top:9px"><svg width="32" height="44" viewBox="0 0 32 44"><path d="M.5 .5H22.500L31.500 9.500V43H.5Z" fill="#f6f6f6" stroke="#dcdcdc"/><path d="M22.500 .5V9.500H31.500Z" fill="#e6e6e6" stroke="#dadada" stroke-linejoin="round"/><path d="M3 4.50H20.5M3 6.81H20.5M3 9.12H20.5M3 11.43H29M3 13.74H29M3 16.05H29M3 18.36H29M3 20.67H29M3 22.98H29M3 25.29H29M3 27.60H29M3 29.91H29M3 32.22H29M3 34.53H29M3 36.84H29M3 39.15H29" stroke="#e5e5e5" stroke-width="1.100" fill="none"/></svg><span>chi</span></div>
<div class="fi" style="left:16px;top:78px"><svg width="32" height="44" viewBox="0 0 32 44"><path d="M.5 .5H22.500L31.500 9.500V43H.5Z" fill="#f6f6f6" stroke="#dcdcdc"/><path d="M22.500 .5V9.500H31.500Z" fill="#e6e6e6" stroke="#dadada" stroke-linejoin="round"/><path d="M3 4.50H20.5M3 6.81H20.5M3 9.12H20.5M3 11.43H29M3 13.74H29M3 16.05H29M3 18.36H29M3 20.67H29M3 22.98H29M3 25.29H29M3 27.60H29M3 29.91H29M3 32.22H29M3 34.53H29M3 36.84H29M3 39.15H29" stroke="#e5e5e5" stroke-width="1.100" fill="none"/></svg><span>cor</span></div>
<div class="fi" style="left:92px;top:78px"><svg width="32" height="44" viewBox="0 0 32 44"><path d="M.5 .5H22.500L31.500 9.500V43H.5Z" fill="#f6f6f6" stroke="#dcdcdc"/><path d="M22.500 .5V9.500H31.500Z" fill="#e6e6e6" stroke="#dadada" stroke-linejoin="round"/><path d="M3 4.50H20.5M3 6.81H20.5M3 9.12H20.5M3 11.43H29M3 13.74H29M3 16.05H29M3 18.36H29M3 20.67H29M3 22.98H29M3 25.29H29M3 27.60H29M3 29.91H29M3 32.22H29M3 34.53H29M3 36.84H29M3 39.15H29" stroke="#e5e5e5" stroke-width="1.100" fill="none"/></svg><span>cro</span></div>
<div class="fi" style="left:168px;top:78px"><svg width="32" height="44" viewBox="0 0 32 44"><path d="M.5 .5H22.500L31.500 9.500V43H.5Z" fill="#f6f6f6" stroke="#dcdcdc"/><path d="M22.500 .5V9.500H31.500Z" fill="#e6e6e6" stroke="#dadada" stroke-linejoin="round"/><path d="M3 4.50H20.5M3 6.81H20.5M3 9.12H20.5M3 11.43H29M3 13.74H29M3 16.05H29M3 18.36H29M3 20.67H29M3 22.98H29M3 25.29H29M3 27.60H29M3 29.91H29M3 32.22H29M3 34.53H29M3 36.84H29M3 39.15H29" stroke="#e5e5e5" stroke-width="1.100" fill="none"/></svg><span>dan</span></div>
<div class="fi" style="left:244px;top:78px"><svg width="32" height="44" viewBox="0 0 32 44"><path d="M.5 .5H22.500L31.500 9.500V43H.5Z" fill="#f6f6f6" stroke="#dcdcdc"/><path d="M22.500 .5V9.500H31.500Z" fill="#e6e6e6" stroke="#dadada" stroke-linejoin="round"/><path d="M3 4.50H20.5M3 6.81H20.5M3 9.12H20.5M3 11.43H29M3 13.74H29M3 16.05H29M3 18.36H29M3 20.67H29M3 22.98H29M3 25.29H29M3 27.60H29M3 29.91H29M3 32.22H29M3 34.53H29M3 36.84H29M3 39.15H29" stroke="#e5e5e5" stroke-width="1.100" fill="none"/></svg><span>eng</span></div>
<div class="fi" style="left:320px;top:78px"><svg width="32" height="44" viewBox="0 0 32 44"><path d="M.5 .5H22.500L31.500 9.500V43H.5Z" fill="#f6f6f6" stroke="#dcdcdc"/><path d="M22.500 .5V9.500H31.500Z" fill="#e6e6e6" stroke="#dadada" stroke-linejoin="round"/><path d="M3 4.50H20.5M3 6.81H20.5M3 9.12H20.5M3 11.43H29M3 13.74H29M3 16.05H29M3 18.36H29M3 20.67H29M3 22.98H29M3 25.29H29M3 27.60H29M3 29.91H29M3 32.22H29M3 34.53H29M3 36.84H29M3 39.15H29" stroke="#e5e5e5" stroke-width="1.100" fill="none"/></svg><span>esl</span></div>
<div class="fi" style="left:396px;top:78px"><svg width="32" height="44" viewBox="0 0 32 44"><path d="M.5 .5H22.500L31.500 9.500V43H.5Z" fill="#f6f6f6" stroke="#dcdcdc"/><path d="M22.500 .5V9.500H31.500Z" fill="#e6e6e6" stroke="#dadada" stroke-linejoin="round"/><path d="M3 4.50H20.5M3 6.81H20.5M3 9.12H20.5M3 11.43H29M3 13.74H29M3 16.05H29M3 18.36H29M3 20.67H29M3 22.98H29M3 25.29H29M3 27.60H29M3 29.91H29M3 32.22H29M3 34.53H29M3 36.84H29M3 39.15H29" stroke="#e5e5e5" stroke-width="1.100" fill="none"/></svg><span>esp</span></div>
<div class="fi" style="left:472px;top:78px"><svg width="32" height="44" viewBox="0 0 32 44"><path d="M.5 .5H22.500L31.500 9.500V43H.5Z" fill="#f6f6f6" stroke="#dcdcdc"/><path d="M22.500 .5V9.500H31.500Z" fill="#e6e6e6" stroke="#dadada" stroke-linejoin="round"/><path d="M3 4.50H20.5M3 6.81H20.5M3 9.12H20.5M3 11.43H29M3 13.74H29M3 16.05H29M3 18.36H29M3 20.67H29M3 22.98H29M3 25.29H29M3 27.60H29M3 29.91H29M3 32.22H29M3 34.53H29M3 36.84H29M3 39.15H29" stroke="#e5e5e5" stroke-width="1.100" fill="none"/></svg><span>est</span></div>
<div class="fi" style="left:548px;top:78px"><svg width="32" height="44" viewBox="0 0 32 44"><path d="M.5 .5H22.500L31.500 9.500V43H.5Z" fill="#f6f6f6" stroke="#dcdcdc"/><path d="M22.500 .5V9.500H31.500Z" fill="#e6e6e6" stroke="#dadada" stroke-linejoin="round"/><path d="M3 4.50H20.5M3 6.81H20.5M3 9.12H20.5M3 11.43H29M3 13.74H29M3 16.05H29M3 18.36H29M3 20.67H29M3 22.98H29M3 25.29H29M3 27.60H29M3 29.91H29M3 32.22H29M3 34.53H29M3 36.84H29M3 39.15H29" stroke="#e5e5e5" stroke-width="1.100" fill="none"/></svg><span>esv</span></div>
<div class="fi" style="left:16px;top:147px"><svg width="32" height="44" viewBox="0 0 32 44"><path d="M.5 .5H22.500L31.500 9.500V43H.5Z" fill="#f6f6f6" stroke="#dcdcdc"/><path d="M22.500 .5V9.500H31.500Z" fill="#e6e6e6" stroke="#dadada" stroke-linejoin="round"/><path d="M3 4.50H20.5M3 6.81H20.5M3 9.12H20.5M3 11.43H29M3 13.74H29M3 16.05H29M3 18.36H29M3 20.67H29M3 22.98H29M3 25.29H29M3 27.60H29M3 29.91H29M3 32.22H29M3 34.53H29M3 36.84H29M3 39.15H29" stroke="#e5e5e5" stroke-width="1.100" fill="none"/></svg><span>eus</span></div>
<div class="fi" style="left:92px;top:147px"><svg width="32" height="44" viewBox="0 0 32 44"><path d="M.5 .5H22.500L31.500 9.500V43H.5Z" fill="#f6f6f6" stroke="#dcdcdc"/><path d="M22.500 .5V9.500H31.500Z" fill="#e6e6e6" stroke="#dadada" stroke-linejoin="round"/><path d="M3 4.50H20.5M3 6.81H20.5M3 9.12H20.5M3 11.43H29M3 13.74H29M3 16.05H29M3 18.36H29M3 20.67H29M3 22.98H29M3 25.29H29M3 27.60H29M3 29.91H29M3 32.22H29M3 34.53H29M3 36.84H29M3 39.15H29" stroke="#e5e5e5" stroke-width="1.100" fill="none"/></svg><span>fin</span></div>
<div class="fi" style="left:168px;top:147px"><svg width="32" height="44" viewBox="0 0 32 44"><path d="M.5 .5H22.500L31.500 9.500V43H.5Z" fill="#f6f6f6" stroke="#dcdcdc"/><path d="M22.500 .5V9.500H31.500Z" fill="#e6e6e6" stroke="#dadada" stroke-linejoin="round"/><path d="M3 4.50H20.5M3 6.81H20.5M3 9.12H20.5M3 11.43H29M3 13.74H29M3 16.05H29M3 18.36H29M3 20.67H29M3 22.98H29M3 25.29H29M3 27.60H29M3 29.91H29M3 32.22H29M3 34.53H29M3 36.84H29M3 39.15H29" stroke="#e5e5e5" stroke-width="1.100" fill="none"/></svg><span>fra</span></div>
<div class="fi" style="left:244px;top:147px"><svg width="32" height="44" viewBox="0 0 32 44"><path d="M.5 .5H22.500L31.500 9.500V43H.5Z" fill="#f6f6f6" stroke="#dcdcdc"/><path d="M22.500 .5V9.500H31.500Z" fill="#e6e6e6" stroke="#dadada" stroke-linejoin="round"/><path d="M3 4.50H20.5M3 6.81H20.5M3 9.12H20.5M3 11.43H29M3 13.74H29M3 16.05H29M3 18.36H29M3 20.67H29M3 22.98H29M3 25.29H29M3 27.60H29M3 29.91H29M3 32.22H29M3 34.53H29M3 36.84H29M3 39.15H29" stroke="#e5e5e5" stroke-width="1.100" fill="none"/></svg><span>gal</span></div>
<div class="fi" style="left:320px;top:147px"><svg width="32" height="44" viewBox="0 0 32 44"><path d="M.5 .5H22.500L31.500 9.500V43H.5Z" fill="#f6f6f6" stroke="#dcdcdc"/><path d="M22.500 .5V9.500H31.500Z" fill="#e6e6e6" stroke="#dadada" stroke-linejoin="round"/><path d="M3 4.50H20.5M3 6.81H20.5M3 9.12H20.5M3 11.43H29M3 13.74H29M3 16.05H29M3 18.36H29M3 20.67H29M3 22.98H29M3 25.29H29M3 27.60H29M3 29.91H29M3 32.22H29M3 34.53H29M3 36.84H29M3 39.15H29" stroke="#e5e5e5" stroke-width="1.100" fill="none"/></svg><span>gri</span></div>
<div class="fi" style="left:396px;top:147px"><svg width="32" height="44" viewBox="0 0 32 44"><path d="M.5 .5H22.500L31.500 9.500V43H.5Z" fill="#f6f6f6" stroke="#dcdcdc"/><path d="M22.500 .5V9.500H31.500Z" fill="#e6e6e6" stroke="#dadada" stroke-linejoin="round"/><path d="M3 4.50H20.5M3 6.81H20.5M3 9.12H20.5M3 11.43H29M3 13.74H29M3 16.05H29M3 18.36H29M3 20.67H29M3 22.98H29M3 25.29H29M3 27.60H29M3 29.91H29M3 32.22H29M3 34.53H29M3 36.84H29M3 39.15H29" stroke="#e5e5e5" stroke-width="1.100" fill="none"/></svg><span>heb</span></div>
<div class="fi" style="left:472px;top:147px"><svg width="32" height="44" viewBox="0 0 32 44"><path d="M.5 .5H22.500L31.500 9.500V43H.5Z" fill="#f6f6f6" stroke="#dcdcdc"/><path d="M22.500 .5V9.500H31.500Z" fill="#e6e6e6" stroke="#dadada" stroke-linejoin="round"/><path d="M3 4.50H20.5M3 6.81H20.5M3 9.12H20.5M3 11.43H29M3 13.74H29M3 16.05H29M3 18.36H29M3 20.67H29M3 22.98H29M3 25.29H29M3 27.60H29M3 29.91H29M3 32.22H29M3 34.53H29M3 36.84H29M3 39.15H29" stroke="#e5e5e5" stroke-width="1.100" fill="none"/></svg><span>hin</span></div>
<div class="fi" style="left:548px;top:147px"><svg width="32" height="44" viewBox="0 0 32 44"><path d="M.5 .5H22.500L31.500 9.500V43H.5Z" fill="#f6f6f6" stroke="#dcdcdc"/><path d="M22.500 .5V9.500H31.500Z" fill="#e6e6e6" stroke="#dadada" stroke-linejoin="round"/><path d="M3 4.50H20.5M3 6.81H20.5M3 9.12H20.5M3 11.43H29M3 13.74H29M3 16.05H29M3 18.36H29M3 20.67H29M3 22.98H29M3 25.29H29M3 27.60H29M3 29.91H29M3 32.22H29M3 34.53H29M3 36.84H29M3 39.15H29" stroke="#e5e5e5" stroke-width="1.100" fill="none"/></svg><span>hun</span></div>
<div class="fi" style="left:16px;top:216px"><svg width="32" height="44" viewBox="0 0 32 44"><path d="M.5 .5H22.500L31.500 9.500V43H.5Z" fill="#f6f6f6" stroke="#dcdcdc"/><path d="M22.500 .5V9.500H31.500Z" fill="#e6e6e6" stroke="#dadada" stroke-linejoin="round"/><path d="M3 4.50H20.5M3 6.81H20.5M3 9.12H20.5M3 11.43H29M3 13.74H29M3 16.05H29M3 18.36H29M3 20.67H29M3 22.98H29M3 25.29H29M3 27.60H29M3 29.91H29M3 32.22H29M3 34.53H29M3 36.84H29M3 39.15H29" stroke="#e5e5e5" stroke-width="1.100" fill="none"/></svg><span>ind</span></div>
<div class="fi" style="left:92px;top:216px"><svg width="32" height="44" viewBox="0 0 32 44"><path d="M.5 .5H22.500L31.500 9.500V43H.5Z" fill="#f6f6f6" stroke="#dcdcdc"/><path d="M22.500 .5V9.500H31.500Z" fill="#e6e6e6" stroke="#dadada" stroke-linejoin="round"/><path d="M3 4.50H20.5M3 6.81H20.5M3 9.12H20.5M3 11.43H29M3 13.74H29M3 16.05H29M3 18.36H29M3 20.67H29M3 22.98H29M3 25.29H29M3 27.60H29M3 29.91H29M3 32.22H29M3 34.53H29M3 36.84H29M3 39.15H29" stroke="#e5e5e5" stroke-width="1.100" fill="none"/></svg><span>irl</span></div>
<div class="fi" style="left:168px;top:216px"><svg width="32" height="44" viewBox="0 0 32 44"><path d="M.5 .5H22.500L31.500 9.500V43H.5Z" fill="#f6f6f6" stroke="#dcdcdc"/><path d="M22.500 .5V9.500H31.500Z" fill="#e6e6e6" stroke="#dadada" stroke-linejoin="round"/><path d="M3 4.50H20.5M3 6.81H20.5M3 9.12H20.5M3 11.43H29M3 13.74H29M3 16.05H29M3 18.36H29M3 20.67H29M3 22.98H29M3 25.29H29M3 27.60H29M3 29.91H29M3 32.22H29M3 34.53H29M3 36.84H29M3 39.15H29" stroke="#e5e5e5" stroke-width="1.100" fill="none"/></svg><span>ita</span></div>
<div class="fi" style="left:244px;top:216px"><svg width="32" height="44" viewBox="0 0 32 44"><path d="M.5 .5H22.500L31.500 9.500V43H.5Z" fill="#f6f6f6" stroke="#dcdcdc"/><path d="M22.500 .5V9.500H31.500Z" fill="#e6e6e6" stroke="#dadada" stroke-linejoin="round"/><path d="M3 4.50H20.5M3 6.81H20.5M3 9.12H20.5M3 11.43H29M3 13.74H29M3 16.05H29M3 18.36H29M3 20.67H29M3 22.98H29M3 25.29H29M3 27.60H29M3 29.91H29M3 32.22H29M3 34.53H29M3 36.84H29M3 39.15H29" stroke="#e5e5e5" stroke-width="1.100" fill="none"/></svg><span>jap</span></div>
<div class="fi" style="left:320px;top:216px"><svg width="32" height="44" viewBox="0 0 32 44"><path d="M.5 .5H22.500L31.500 9.500V43H.5Z" fill="#f6f6f6" stroke="#dcdcdc"/><path d="M22.500 .5V9.500H31.500Z" fill="#e6e6e6" stroke="#dadada" stroke-linejoin="round"/><path d="M3 4.50H20.5M3 6.81H20.5M3 9.12H20.5M3 11.43H29M3 13.74H29M3 16.05H29M3 18.36H29M3 20.67H29M3 22.98H29M3 25.29H29M3 27.60H29M3 29.91H29M3 32.22H29M3 34.53H29M3 36.84H29M3 39.15H29" stroke="#e5e5e5" stroke-width="1.100" fill="none"/></svg><span>lat</span></div>
<div class="fi" style="left:396px;top:216px"><svg width="32" height="44" viewBox="0 0 32 44"><path d="M.5 .5H22.500L31.500 9.500V43H.5Z" fill="#f6f6f6" stroke="#dcdcdc"/><path d="M22.500 .5V9.500H31.500Z" fill="#e6e6e6" stroke="#dadada" stroke-linejoin="round"/><path d="M3 4.50H20.5M3 6.81H20.5M3 9.12H20.5M3 11.43H29M3 13.74H29M3 16.05H29M3 18.36H29M3 20.67H29M3 22.98H29M3 25.29H29M3 27.60H29M3 29.91H29M3 32.22H29M3 34.53H29M3 36.84H29M3 39.15H29" stroke="#e5e5e5" stroke-width="1.100" fill="none"/></svg><span>let</span></div>
<div class="fi" style="left:472px;top:216px"><svg width="32" height="44" viewBox="0 0 32 44"><path d="M.5 .5H22.500L31.500 9.500V43H.5Z" fill="#f6f6f6" stroke="#dcdcdc"/><path d="M22.500 .5V9.500H31.500Z" fill="#e6e6e6" stroke="#dadada" stroke-linejoin="round"/><path d="M3 4.50H20.5M3 6.81H20.5M3 9.12H20.5M3 11.43H29M3 13.74H29M3 16.05H29M3 18.36H29M3 20.67H29M3 22.98H29M3 25.29H29M3 27.60H29M3 29.91H29M3 32.22H29M3 34.53H29M3 36.84H29M3 39.15H29" stroke="#e5e5e5" stroke-width="1.100" fill="none"/></svg><span>lit</span></div>
<div class="fi" style="left:548px;top:216px"><svg width="32" height="44" viewBox="0 0 32 44"><path d="M.5 .5H22.500L31.500 9.500V43H.5Z" fill="#f6f6f6" stroke="#dcdcdc"/><path d="M22.500 .5V9.500H31.500Z" fill="#e6e6e6" stroke="#dadada" stroke-linejoin="round"/><path d="M3 4.50H20.5M3 6.81H20.5M3 9.12H20.5M3 11.43H29M3 13.74H29M3 16.05H29M3 18.36H29M3 20.67H29M3 22.98H29M3 25.29H29M3 27.60H29M3 29.91H29M3 32.22H29M3 34.53H29M3 36.84H29M3 39.15H29" stroke="#e5e5e5" stroke-width="1.100" fill="none"/></svg><span>mal</span></div>
<div class="fi" style="left:16px;top:285px"><svg width="32" height="44" viewBox="0 0 32 44"><path d="M.5 .5H22.500L31.500 9.500V43H.5Z" fill="#f6f6f6" stroke="#dcdcdc"/><path d="M22.500 .5V9.500H31.500Z" fill="#e6e6e6" stroke="#dadada" stroke-linejoin="round"/><path d="M3 4.50H20.5M3 6.81H20.5M3 9.12H20.5M3 11.43H29M3 13.74H29M3 16.05H29M3 18.36H29M3 20.67H29M3 22.98H29M3 25.29H29M3 27.60H29M3 29.91H29M3 32.22H29M3 34.53H29M3 36.84H29M3 39.15H29" stroke="#e5e5e5" stroke-width="1.100" fill="none"/></svg><span>nee</span></div>
<div class="fi" style="left:92px;top:285px"><svg width="32" height="44" viewBox="0 0 32 44"><path d="M.5 .5H22.500L31.500 9.500V43H.5Z" fill="#f6f6f6" stroke="#dcdcdc"/><path d="M22.500 .5V9.500H31.500Z" fill="#e6e6e6" stroke="#dadada" stroke-linejoin="round"/><path d="M3 4.50H20.5M3 6.81H20.5M3 9.12H20.5M3 11.43H29M3 13.74H29M3 16.05H29M3 18.36H29M3 20.67H29M3 22.98H29M3 25.29H29M3 27.60H29M3 29.91H29M3 32.22H29M3 34.53H29M3 36.84H29M3 39.15H29" stroke="#e5e5e5" stroke-width="1.100" fill="none"/></svg><span>nor</span></div>
<div class="fi" style="left:168px;top:285px"><svg width="32" height="44" viewBox="0 0 32 44"><path d="M.5 .5H22.500L31.500 9.500V43H.5Z" fill="#f6f6f6" stroke="#dcdcdc"/><path d="M22.500 .5V9.500H31.500Z" fill="#e6e6e6" stroke="#dadada" stroke-linejoin="round"/><path d="M3 4.50H20.5M3 6.81H20.5M3 9.12H20.5M3 11.43H29M3 13.74H29M3 16.05H29M3 18.36H29M3 20.67H29M3 22.98H29M3 25.29H29M3 27.60H29M3 29.91H29M3 32.22H29M3 34.53H29M3 36.84H29M3 39.15H29" stroke="#e5e5e5" stroke-width="1.100" fill="none"/></svg><span>pol</span></div>
<div class="fi" style="left:244px;top:285px"><svg width="32" height="44" viewBox="0 0 32 44"><path d="M.5 .5H22.500L31.500 9.500V43H.5Z" fill="#f6f6f6" stroke="#dcdcdc"/><path d="M22.500 .5V9.500H31.500Z" fill="#e6e6e6" stroke="#dadada" stroke-linejoin="round"/><path d="M3 4.50H20.5M3 6.81H20.5M3 9.12H20.5M3 11.43H29M3 13.74H29M3 16.05H29M3 18.36H29M3 20.67H29M3 22.98H29M3 25.29H29M3 27.60H29M3 29.91H29M3 32.22H29M3 34.53H29M3 36.84H29M3 39.15H29" stroke="#e5e5e5" stroke-width="1.100" fill="none"/></svg><span>por</span></div>
<div class="fi" style="left:320px;top:285px"><svg width="32" height="44" viewBox="0 0 32 44"><path d="M.5 .5H22.500L31.500 9.500V43H.5Z" fill="#f6f6f6" stroke="#dcdcdc"/><path d="M22.500 .5V9.500H31.500Z" fill="#e6e6e6" stroke="#dadada" stroke-linejoin="round"/><path d="M3 4.50H20.5M3 6.81H20.5M3 9.12H20.5M3 11.43H29M3 13.74H29M3 16.05H29M3 18.36H29M3 20.67H29M3 22.98H29M3 25.29H29M3 27.60H29M3 29.91H29M3 32.22H29M3 34.53H29M3 36.84H29M3 39.15H29" stroke="#e5e5e5" stroke-width="1.100" fill="none"/></svg><span>rum</span></div>
<div class="fi" style="left:396px;top:285px"><svg width="32" height="44" viewBox="0 0 32 44"><path d="M.5 .5H22.500L31.500 9.500V43H.5Z" fill="#f6f6f6" stroke="#dcdcdc"/><path d="M22.500 .5V9.500H31.500Z" fill="#e6e6e6" stroke="#dadada" stroke-linejoin="round"/><path d="M3 4.50H20.5M3 6.81H20.5M3 9.12H20.5M3 11.43H29M3 13.74H29M3 16.05H29M3 18.36H29M3 20.67H29M3 22.98H29M3 25.29H29M3 27.60H29M3 29.91H29M3 32.22H29M3 34.53H29M3 36.84H29M3 39.15H29" stroke="#e5e5e5" stroke-width="1.100" fill="none"/></svg><span>rus</span></div>
<div class="fi" style="left:472px;top:285px"><svg width="32" height="44" viewBox="0 0 32 44"><path d="M.5 .5H22.500L31.500 9.500V43H.5Z" fill="#f6f6f6" stroke="#dcdcdc"/><path d="M22.500 .5V9.500H31.500Z" fill="#e6e6e6" stroke="#dadada" stroke-linejoin="round"/><path d="M3 4.50H20.5M3 6.81H20.5M3 9.12H20.5M3 11.43H29M3 13.74H29M3 16.05H29M3 18.36H29M3 20.67H29M3 22.98H29M3 25.29H29M3 27.60H29M3 29.91H29M3 32.22H29M3 34.53H29M3 36.84H29M3 39.15H29" stroke="#e5e5e5" stroke-width="1.100" fill="none"/></svg><span>ser</span></div>
<div class="fi" style="left:548px;top:285px"><svg width="32" height="44" viewBox="0 0 32 44"><path d="M.5 .5H22.500L31.500 9.500V43H.5Z" fill="#f6f6f6" stroke="#dcdcdc"/><path d="M22.500 .5V9.500H31.500Z" fill="#e6e6e6" stroke="#dadada" stroke-linejoin="round"/><path d="M3 4.50H20.5M3 6.81H20.5M3 9.12H20.5M3 11.43H29M3 13.74H29M3 16.05H29M3 18.36H29M3 20.67H29M3 22.98H29M3 25.29H29M3 27.60H29M3 29.91H29M3 32.22H29M3 34.53H29M3 36.84H29M3 39.15H29" stroke="#e5e5e5" stroke-width="1.100" fill="none"/></svg><span>sue</span></div>
<div class="fi" style="left:16px;top:354px"><svg width="32" height="44" viewBox="0 0 32 44"><path d="M.5 .5H22.500L31.500 9.500V43H.5Z" fill="#f6f6f6" stroke="#dcdcdc"/><path d="M22.500 .5V9.500H31.500Z" fill="#e6e6e6" stroke="#dadada" stroke-linejoin="round"/><path d="M3 4.50H20.5M3 6.81H20.5M3 9.12H20.5M3 11.43H29M3 13.74H29M3 16.05H29M3 18.36H29M3 20.67H29M3 22.98H29M3 25.29H29M3 27.60H29M3 29.91H29M3 32.22H29M3 34.53H29M3 36.84H29M3 39.15H29" stroke="#e5e5e5" stroke-width="1.100" fill="none"/></svg><span></span></div>
<div class="fi" style="left:92px;top:354px"><svg width="32" height="44" viewBox="0 0 32 44"><path d="M.5 .5H22.500L31.500 9.500V43H.5Z" fill="#f6f6f6" stroke="#dcdcdc"/><path d="M22.500 .5V9.500H31.500Z" fill="#e6e6e6" stroke="#dadada" stroke-linejoin="round"/><path d="M3 4.50H20.5M3 6.81H20.5M3 9.12H20.5M3 11.43H29M3 13.74H29M3 16.05H29M3 18.36H29M3 20.67H29M3 22.98H29M3 25.29H29M3 27.60H29M3 29.91H29M3 32.22H29M3 34.53H29M3 36.84H29M3 39.15H29" stroke="#e5e5e5" stroke-width="1.100" fill="none"/></svg><span></span></div>
<div class="fi" style="left:168px;top:354px"><svg width="32" height="44" viewBox="0 0 32 44"><path d="M.5 .5H22.500L31.500 9.500V43H.5Z" fill="#f6f6f6" stroke="#dcdcdc"/><path d="M22.500 .5V9.500H31.500Z" fill="#e6e6e6" stroke="#dadada" stroke-linejoin="round"/><path d="M3 4.50H20.5M3 6.81H20.5M3 9.12H20.5M3 11.43H29M3 13.74H29M3 16.05H29M3 18.36H29M3 20.67H29M3 22.98H29M3 25.29H29M3 27.60H29M3 29.91H29M3 32.22H29M3 34.53H29M3 36.84H29M3 39.15H29" stroke="#e5e5e5" stroke-width="1.100" fill="none"/></svg><span></span></div>
</div>
<div class="abs" id="sb2"><i></i><svg class="abs" style="left:4px;top:6px" width="9" height="6" viewBox="0 0 9 6"><path d="M.8 5L4.500 1.300L8.200 5" stroke="#484848" stroke-width="1.900" fill="none"/></svg><svg class="abs" style="left:4px;top:347px" width="9" height="6" viewBox="0 0 9 6"><path d="M.8 1L4.500 4.700L8.200 1" stroke="#484848" stroke-width="1.900" fill="none"/></svg></div>
<div class="abs" id="foot"><div class="t" style="left:130px;top:13px;letter-spacing:.12px">Nombre:</div><div class="abs" id="fname"><svg class="abs" style="left:385px;top:8px" width="10" height="6" viewBox="0 0 10 6"><path d="M.7 .8L5 5L9.300 .8" stroke="#444" stroke-width="1.100" fill="none"/></svg></div>
<div class="abs" id="ftype"><div class="t" style="left:4px;top:3px;letter-spacing:-.15px">Todos los archivos</div><svg class="abs" style="left:172px;top:8px" width="10" height="6" viewBox="0 0 10 6"><path d="M.7 .8L5 5L9.300 .8" stroke="#444" stroke-width="1.100" fill="none"/></svg></div>
<div class="btn" id="bopen">Abrir</div><div class="btn" id="bcancel">Cancelar</div>
<div class="abs" style="left:783px;top:55px;width:17px;height:4px;background:#fbfbfb"></div><div class="abs" style="left:779px;top:64px;width:4px;height:12px;background:#fbfbfb"></div>
<svg class="abs" style="left:789px;top:65px" width="10" height="10" viewBox="0 0 10 10"><path d="M7 1H9V3H7ZM4 4H6V6H4ZM7 4H9V6H7ZM1 7H3V9H1ZM4 7H6V9H4ZM7 7H9V9H7Z" fill="#b8b8b8"/></svg>
</div>
</div>
</body>
</html>
